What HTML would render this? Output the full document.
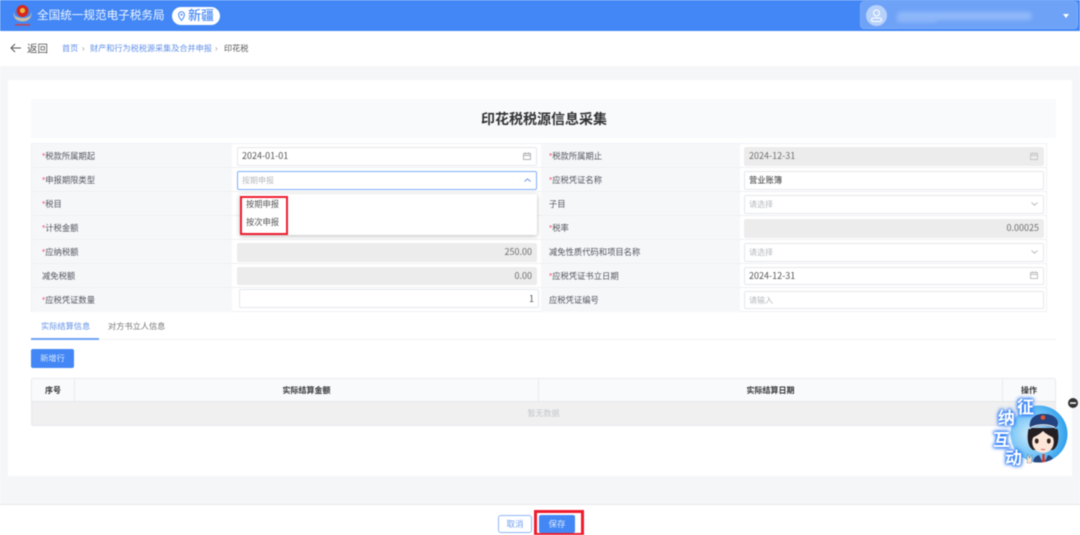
<!DOCTYPE html>
<html lang="zh"><head><meta charset="utf-8"><title>印花税税源信息采集</title>
<style>
*{box-sizing:border-box;margin:0;padding:0}
html,body{width:1080px;height:535px;overflow:hidden;background:#fff}
body{font-family:"Liberation Sans","Noto Sans CJK SC",sans-serif;position:relative;color:#555}
#root{position:absolute;left:0;top:0;width:1080px;height:535px;filter:blur(.45px);overflow:hidden}
.a{position:absolute;white-space:nowrap}
.lab{position:absolute;font-size:8.3px;line-height:24px;height:24px;color:#4f545c;white-space:nowrap}
.lab i{color:#f0506e;font-style:normal}
.in{position:absolute;height:18.5px;background:#fff;border:1px solid #e4e7ec;border-radius:2px;font-family:"Noto Sans CJK SC",sans-serif;font-size:9px;line-height:16.5px;padding:0 4px;color:#555;white-space:nowrap}
.dis{background:#ececec;border-color:#ececec;color:#6f6f6f}
.ph{color:#b5b8be;font-size:8px;line-height:17.5px}
.r{text-align:right}
.th{position:absolute;top:379px;height:23px;line-height:23px;text-align:center;font-size:8px;font-weight:700;color:#333;background:#f9fafb;border-right:1px solid #e8eaee}
svg{position:absolute;overflow:visible}
.m{position:absolute;font-family:"Noto Sans CJK SC",sans-serif;font-size:17px;line-height:18px;font-weight:700;color:#fff;text-shadow:0 0 2px #2f7df6,0 0 3px #2f7df6,0 0 4px #2f7df6,0 0 4px #2f7df6;white-space:nowrap}
</style></head><body><div id="root">

<!-- header -->
<div class="a" style="left:0;top:0;width:1080px;height:31px;background:#4287f5"></div>
<svg style="left:12px;top:3px" width="22" height="25" viewBox="0 0 22 25">
<path d="M1.500 9 Q1 18 10.500 18.500 Q20 18 19.500 9 L18 13 Q11 17 3 13Z" fill="#c7bda6"/>
<circle cx="10.500" cy="8" r="6" fill="#d8261f"/><circle cx="10.500" cy="7.500" r="2.600" fill="#e9b93a"/>
<rect x="3" y="21" width="15" height="1.600" fill="#e2352b" opacity=".8"/></svg>
<div class="a" style="left:37px;top:7px;font-size:11.6px;line-height:17px;color:#f0f5ff">全国统一规范电子税务局</div>
<div class="a" style="left:172px;top:7px;width:48px;height:18px;background:#fff;border-radius:9px"></div>
<svg style="left:178px;top:11px" width="7" height="10" viewBox="0 0 7 10"><path d="M3.500 9.500C1.500 7 .6 5.500.6 3.700a2.900 2.900 0 0 1 5.800 0C6.400 5.500 5.500 7 3.500 9.500Z" fill="none" stroke="#4287f5"/><circle cx="3.500" cy="3.700" r="1" fill="#4287f5"/></svg>
<div class="a" style="left:188px;top:7px;font-size:13px;line-height:18px;font-weight:500;color:#4287f5">新疆</div>
<div class="a" style="left:860px;top:1px;width:218px;height:28px;background:#6ea2f7;border-radius:4px;border:1px solid #7cabf8"></div>
<div class="a" style="left:866px;top:5px;width:21px;height:21px;border-radius:50%;background:#b7d1fb"></div>
<svg style="left:866px;top:5px" width="21" height="21" viewBox="0 0 21 21"><circle cx="10.500" cy="8" r="3" fill="none" stroke="#fff" stroke-width="1.100"/><rect x="5.500" y="13" width="10" height="3.500" rx="1.700" fill="none" stroke="#fff" stroke-width="1.100"/></svg>
<div class="a" style="left:897px;top:12px;width:135px;height:8px;background:#90b9f9;filter:blur(2px);border-radius:4px"></div>
<div class="a" style="left:897px;top:18px;width:40px;height:4px;background:#8eb7f9;filter:blur(2px)"></div>
<svg style="left:1063px;top:14px" width="6" height="4"><path d="M0 0H6L3 4Z" fill="#fff"/></svg>

<!-- breadcrumb -->
<svg style="left:10px;top:43px" width="12" height="10" viewBox="0 0 12 10"><path d="M11 5H1M5 1 1 5l4 4" fill="none" stroke="#555" stroke-width="1"/></svg>
<div class="a" style="left:27px;top:41px;font-size:10.5px;line-height:16px;color:#555">返回</div>
<div class="a" style="left:62px;top:43px;font-size:8.15px;line-height:12px;color:#5f8fe8">首页</div>
<div class="a" style="left:82px;top:43px;font-size:8px;line-height:12px;color:#999">›</div>
<div class="a" style="left:90px;top:43px;font-size:8.15px;line-height:12px;color:#5f8fe8">财产和行为税税源采集及合并申报</div>
<div class="a" style="left:215px;top:43px;font-size:8px;line-height:12px;color:#999">›</div>
<div class="a" style="left:224px;top:43px;font-size:8.15px;line-height:12px;color:#555">印花税</div>

<!-- page bg + card -->
<div class="a" style="left:0;top:66px;width:1080px;height:438px;background:#f5f6f8"></div>
<div class="a" style="left:8px;top:80px;width:1064px;height:396px;background:#fff"></div>
<div class="a" style="left:31px;top:99px;width:1025px;height:39px;background:#f9fafc"></div>
<div class="a" style="left:481px;top:109px;font-size:14px;line-height:21px;font-weight:700;color:#333">印花税税源信息采集</div>

<!-- form table -->
<div class="a" style="left:31px;top:143px;width:1016px;height:169px;border:1px solid #f0f1f4;background:#fff"></div>
<div class="a" style="left:32px;top:144px;width:200px;height:168px;background:#f6f7f9"></div>
<div class="a" style="left:541px;top:144px;width:199px;height:168px;background:#f6f7f9"></div>
<div class="a" style="left:32px;top:167px;width:1015px;height:1px;background:#eff0f3"></div>
<div class="a" style="left:32px;top:191px;width:1015px;height:1px;background:#eff0f3"></div>
<div class="a" style="left:32px;top:215px;width:1015px;height:1px;background:#eff0f3"></div>
<div class="a" style="left:32px;top:239px;width:1015px;height:1px;background:#eff0f3"></div>
<div class="a" style="left:32px;top:263px;width:1015px;height:1px;background:#eff0f3"></div>
<div class="a" style="left:32px;top:287px;width:1015px;height:1px;background:#eff0f3"></div>

<div class="lab" style="left:42px;top:144px"><i>*</i>税款所属期起</div>
<div class="lab" style="left:42px;top:168px"><i>*</i>申报期限类型</div>
<div class="lab" style="left:42px;top:192px"><i>*</i>税目</div>
<div class="lab" style="left:42px;top:216px"><i>*</i>计税金额</div>
<div class="lab" style="left:42px;top:240px"><i>*</i>应纳税额</div>
<div class="lab" style="left:42px;top:264px">减免税额</div>
<div class="lab" style="left:42px;top:288px"><i>*</i>应税凭证数量</div>

<div class="lab" style="left:549px;top:144px"><i>*</i>税款所属期止</div>
<div class="lab" style="left:549px;top:168px"><i>*</i>应税凭证名称</div>
<div class="lab" style="left:549px;top:192px">子目</div>
<div class="lab" style="left:549px;top:216px"><i>*</i>税率</div>
<div class="lab" style="left:549px;top:240px">减免性质代码和项目名称</div>
<div class="lab" style="left:549px;top:264px"><i>*</i>应税凭证书立日期</div>
<div class="lab" style="left:549px;top:288px">应税凭证编号</div>

<div class="in" style="left:237px;top:147px;width:300px">2024-01-01</div>
<div class="in ph" style="left:237px;top:171px;width:300px;border-color:#7fb0f8">按期申报</div>
<div class="in dis r" style="left:237px;top:243px;width:300px">250.00</div>
<div class="in dis r" style="left:237px;top:266.5px;width:300px">0.00</div>
<div class="in r" style="left:239px;top:289px;width:300px;line-height:18px">1</div>

<div class="in dis" style="left:744px;top:147px;width:300px">2024-12-31</div>
<div class="in" style="left:744px;top:171px;width:300px;color:#333;font-size:8.3px">营业账簿</div>
<div class="in ph" style="left:744px;top:195px;width:300px">请选择</div>
<div class="in dis r" style="left:744px;top:219px;width:300px">0.00025</div>
<div class="in ph" style="left:744px;top:243px;width:300px">请选择</div>
<div class="in" style="left:744px;top:266.5px;width:300px">2024-12-31</div>
<div class="in ph" style="left:744px;top:290.5px;width:300px">请输入</div>

<svg style="left:523px;top:152px" width="8" height="8" viewBox="0 0 8 8"><path d="M.5 1.500h7v6h-7zM.5 3.500h7M2.500.3v2M5.500.3v2" fill="none" stroke="#999" stroke-width=".7"/></svg>
<svg style="left:1030px;top:152px" width="8" height="8" viewBox="0 0 8 8"><path d="M.5 1.500h7v6h-7zM.5 3.500h7M2.500.3v2M5.500.3v2" fill="none" stroke="#bbb" stroke-width=".7"/></svg>
<svg style="left:1030px;top:271px" width="8" height="8" viewBox="0 0 8 8"><path d="M.5 1.500h7v6h-7zM.5 3.500h7M2.500.3v2M5.500.3v2" fill="none" stroke="#aaa" stroke-width=".7"/></svg>
<svg style="left:524px;top:178px" width="7" height="4"><path d="M.5 3.500 3.500.8l3 2.700" fill="none" stroke="#5f8fe8" stroke-width=".9"/></svg>
<svg style="left:1031px;top:202px" width="7" height="4"><path d="M.5.500l3 2.700 3-2.700" fill="none" stroke="#aaa" stroke-width=".8"/></svg>
<svg style="left:1031px;top:250px" width="7" height="4"><path d="M.5.500l3 2.700 3-2.700" fill="none" stroke="#aaa" stroke-width=".8"/></svg>

<!-- dropdown -->
<div class="a" style="left:240px;top:194px;width:297px;height:41px;background:#fff;border-radius:2px;box-shadow:0 1px 5px rgba(0,0,0,.28)"></div>
<div class="a" style="left:246px;top:199px;font-size:8.25px;line-height:12px;color:#555">按期申报</div>
<div class="a" style="left:246px;top:217px;font-size:8.25px;line-height:12px;color:#555">按次申报</div>
<div class="a" style="left:240px;top:196px;width:48px;height:39px;border:2px solid #ee1c2e"></div>

<!-- tabs -->
<div class="a" style="left:41px;top:320.5px;font-size:8.2px;line-height:12px;color:#5f8fe8">实际结算信息</div>
<div class="a" style="left:108px;top:320.5px;font-size:8.2px;line-height:12px;color:#777">对方书立人信息</div>
<div class="a" style="left:31px;top:339px;width:1025px;height:1px;background:#f2f3f5"></div>
<div class="a" style="left:31px;top:338px;width:68px;height:2px;background:#6ea2f7"></div>
<div class="a" style="left:31px;top:349px;width:43px;height:19px;background:#4287f5;border-radius:2px;color:#dbe8fd;font-size:8.2px;line-height:19px;text-align:center">新增行</div>

<!-- table -->
<div class="a" style="left:31px;top:378px;width:1025px;height:48px;border:1px solid #e8eaee;border-radius:2px;background:#f0f0f0"></div>
<div class="th" style="left:32px;width:43px">序号</div>
<div class="th" style="left:75px;width:464px">实际结算金额</div>
<div class="th" style="left:539px;width:464px">实际结算日期</div>
<div class="th" style="left:1003px;width:52px;border-right:0">操作</div>
<div class="a" style="left:31px;top:401px;width:1025px;height:1px;background:#e4e6ea"></div>
<div class="a" style="left:31px;top:408px;width:1025px;font-size:8px;line-height:12px;text-align:center;color:#c4c6ca">暂无数据</div>

<!-- mascot -->
<svg style="left:990px;top:396px" width="90" height="74" viewBox="990 396 90 74">
<defs><radialGradient id="g" cx=".35" cy=".5" r=".75"><stop offset="0" stop-color="#cdeafc"/><stop offset=".55" stop-color="#6cc0f5"/><stop offset="1" stop-color="#1490e8"/></radialGradient>
<clipPath id="cc"><circle cx="1039" cy="434" r="28.5"/></clipPath></defs>
<circle cx="1039" cy="434" r="28.500" fill="url(#g)"/>
<g clip-path="url(#cc)">
<path d="M1031 463C1032 455 1054 455 1056 463Z" fill="#8fc4ee"/>
<path d="M1033 463C1033 458 1036 456 1039 455L1043 463Z M1054 463C1054 458 1051 456 1048 455L1044 463Z" fill="#27477f"/>
<path d="M1042.500 454h2l.8 9h-3.400Z" fill="#d13b2e"/>
</g>
<path d="M1028.500 429C1026.500 439 1028 447 1033 450L1053 450C1058 447 1059.500 439 1057.500 429Z" fill="#241d22"/>
<ellipse cx="1043" cy="442" rx="10.800" ry="11" fill="#fde6d8"/>
<path d="M1032 438C1036 436 1040 434 1043 431 1046 434 1050 436 1054 438L1055 428H1031Z" fill="#241d22"/>
<path d="M1030 423C1031 416 1039 413 1045 414 1052 414 1058 418 1058 423 1058 426 1056 428 1054 428 1046 425 1039 425 1032 428 1030 428 1029 426 1030 423Z" fill="#24427d"/>
<path d="M1031 427.500C1038 424 1048 424 1055 427.500" stroke="#e4eaf5" stroke-width="1.300" fill="none"/>
<circle cx="1043" cy="417.500" r="2.300" fill="#e8532c"/>
<ellipse cx="1036.500" cy="441" rx="2.800" ry="3" fill="#fff"/><ellipse cx="1049" cy="441" rx="2.800" ry="3" fill="#fff"/>
<ellipse cx="1036.700" cy="441" rx="2" ry="2.600" fill="#3f2419"/><ellipse cx="1048.800" cy="441" rx="2" ry="2.600" fill="#3f2419"/>
<path d="M1041 449q2 1.500 4 0" stroke="#c8504a" stroke-width=".8" fill="none"/>
<path d="M1027 463l.5-9 2 4.500 2.500-3.500-.5 8Z" fill="#fde6d8" stroke="#555" stroke-width=".3"/>
<circle cx="1073" cy="403" r="5" fill="#333"/><rect x="1070" y="402.300" width="6" height="1.500" fill="#fff"/>
</svg>
<div class="m" style="left:1017px;top:397px">征</div>
<div class="m" style="left:998px;top:408px">纳</div>
<div class="m" style="left:993px;top:430px">互</div>
<div class="m" style="left:1005px;top:448px">动</div>

<!-- footer -->
<div class="a" style="left:0;top:504px;width:1080px;height:31px;background:#fff;border-top:1px solid #e6e8ec"></div>
<div class="a" style="left:498px;top:515px;width:34px;height:18px;border:1px solid #8fb6f7;border-radius:3px;background:#fff;color:#6d9cee;font-size:8.5px;line-height:16px;text-align:center">取消</div>
<div class="a" style="left:539px;top:515px;width:36px;height:18px;background:#4287f5;border-radius:2px;color:#dbe8fd;font-size:8.5px;line-height:18px;text-align:center">保存</div>
<div class="a" style="left:534px;top:510px;width:50px;height:26px;border:3px solid #ee1c2e"></div>
</div></body></html>
